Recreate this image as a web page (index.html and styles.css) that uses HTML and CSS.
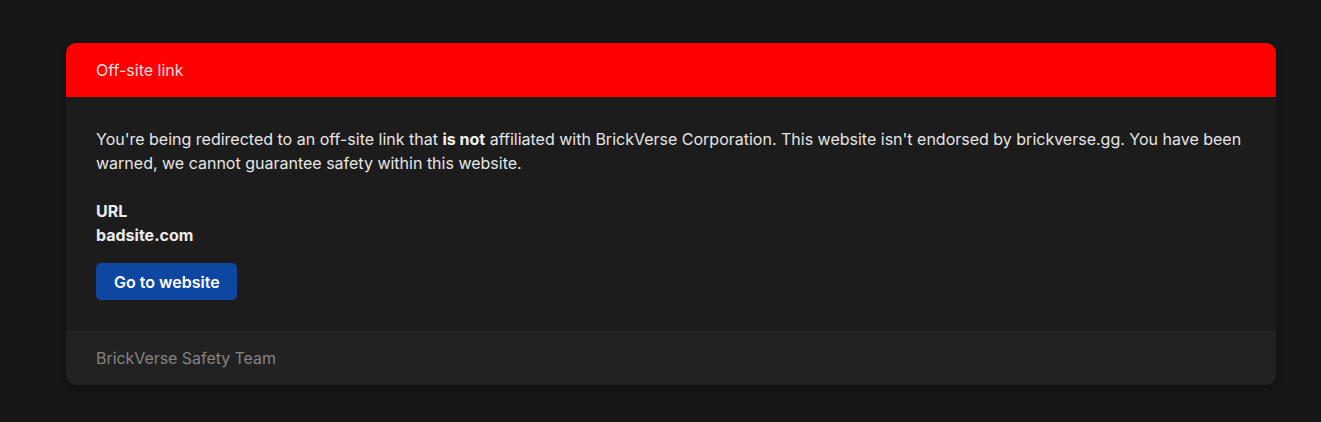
FILE: index.html
```html
<!DOCTYPE html>
<html lang="en">
<head>
<meta charset="utf-8">
<title>Off-site link</title>
<link rel="stylesheet" href="styles.css">
</head>
<body>
<main class="page">
  <section class="card">
    <header class="card-header">Off-site link</header>
    <div class="card-body">
      <p class="warning">You're being redirected to an off-site link that <strong>is not</strong> affiliated with BrickVerse Corporation. This website isn't endorsed by brickverse.gg. You have been warned, we cannot guarantee safety within this website.</p>
      <div class="url-block">
        <div class="url-label">URL</div>
        <div class="url-value">badsite.com</div>
      </div>
      <a class="btn" href="#">Go to website</a>
    </div>
    <footer class="card-footer">BrickVerse Safety Team</footer>
  </section>
</main>
</body>
</html>
```
FILE: styles.css
```css
* { box-sizing: border-box; }
html, body {
  margin: 0;
  padding: 0;
  background: #171717;
  font-family: Inter, "Noto Sans", sans-serif;
  font-size: 16px;
  line-height: 24px;
  color: #e6e6e6;
}
.page {
  padding: 43px 45px 37px 66px;
}
.card {
  background: #1c1c1c;
  border-radius: 10px;
  overflow: hidden;
  box-shadow: 0 2px 6px rgba(0,0,0,0.35);
}
.card-header {
  background: #ff0000;
  color: #fbdede;
  height: 54px;
  padding: 0 30px;
  display: flex;
  align-items: center;
}
.card-body {
  padding: 30px 30px 31px;
}
.warning {
  margin: 0 0 24px;
}
.warning strong { font-weight: 700; color: #f2f2f2; }
.url-block {
  font-weight: 700;
  color: #ececec;
  margin-bottom: 16px;
}
.btn {
  display: inline-flex;
  align-items: center;
  height: 37px;
  padding: 0 17px 0 18px;
  background: #0d47a1;
  color: #ffffff;
  font-weight: 600;
  text-decoration: none;
  border-radius: 5px;
}
.card-footer {
  background: #222222;
  color: #838383;
  height: 54px;
  padding: 0 30px;
  display: flex;
  align-items: center;
  letter-spacing: -0.05px;
}
```
